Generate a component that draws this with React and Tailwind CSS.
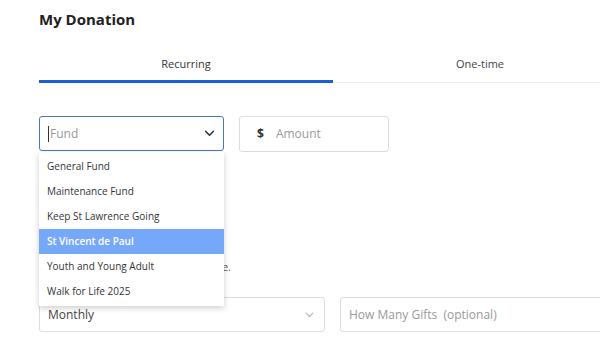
import React from "react";

const Chevron = ({ className }) => (
  <svg className={className} width="12" height="8" viewBox="0 0 12 8" fill="none">
    <path d="M1.5 1.5 L6 6 L10.5 1.5" stroke="currentColor" strokeWidth="1.8" strokeLinecap="round" strokeLinejoin="round" />
  </svg>
);

const items = [
  "General Fund",
  "Maintenance Fund",
  "Keep St Lawrence Going",
  "St Vincent de Paul",
  "Youth and Young Adult",
  "Walk for Life 2025",
];

export default function App() {
  return (
    <div className="w-[600px] h-[340px] overflow-hidden bg-white" style={{ fontFamily: '"Open Sans", "Noto Sans", sans-serif' }}>
      <div className="pl-[39px] w-[627px]">
        <h1 className="pt-[8px] text-[15px] font-bold text-[#222] leading-[22px]">My Donation</h1>
        <div className="mt-[26px] flex border-b border-[#ececec]">
          <div className="flex-1 text-center text-[11px] text-[#333] pb-[8px] border-b-[3px] border-[#1a5fd3] -mb-px leading-[16px]">Recurring</div>
          <div className="flex-1 text-center text-[11px] text-[#444] pb-[8px] leading-[16px]">One-time</div>
        </div>

        <div className="mt-[33px] flex gap-[15px]">
          <div className="relative w-[185px] shrink-0">
            <div className="h-[35px] border border-[#4a78b8] rounded-[3px] flex items-center pl-[8px] pr-[8px]">
              <span className="w-px h-[16px] bg-[#333]" />
              <span className="text-[12px] text-[#999] ml-px">Fund</span>
              <Chevron className="ml-auto text-[#333] w-[11px] h-[7px]" />
            </div>
            <div className="absolute left-0 top-[36px] w-[185px] z-10 bg-white shadow-[0_2px_6px_rgba(0,0,0,0.2)] py-[2px]">
              {items.map((it, i) => (
                <div
                  key={it}
                  className={
                    "h-[25px] flex items-center pl-[8px] text-[10px] " +
                    (i === 3 ? "bg-[#76a8f9] text-white font-semibold" : "text-[#333]")
                  }
                >
                  {it}
                </div>
              ))}
            </div>
          </div>
          <div className="w-[150px] h-[36px] shrink-0 border border-[#ddd] rounded-[3px] flex items-center pl-[17px]">
            <span className="text-[12px] font-bold text-[#333]">$</span>
            <span className="text-[12px] text-[#999] ml-[12px]">Amount</span>
          </div>
        </div>

        <div className="mt-[107px] w-[192px] flex justify-end text-[11px] text-[#555] leading-[16px] whitespace-nowrap">
          <span>Please choose how often to donate.</span>
        </div>

        <div className="mt-[22px] flex gap-[15px]">
          <div className="w-[286px] shrink-0 h-[35px] border border-[#ddd] rounded-[3px] flex items-center pl-[8px] pr-[10px]">
            <span className="text-[12px] text-[#444]">Monthly</span>
            <Chevron className="ml-auto text-[#bbb] w-[9px] h-[6px]" />
          </div>
          <div className="w-[300px] shrink-0 h-[35px] border border-[#ddd] rounded-[3px] flex items-center pl-[8px]">
            <span className="text-[12px] text-[#999] whitespace-pre">How Many Gifts  (optional)</span>
          </div>
        </div>
      </div>
    </div>
  );
}
